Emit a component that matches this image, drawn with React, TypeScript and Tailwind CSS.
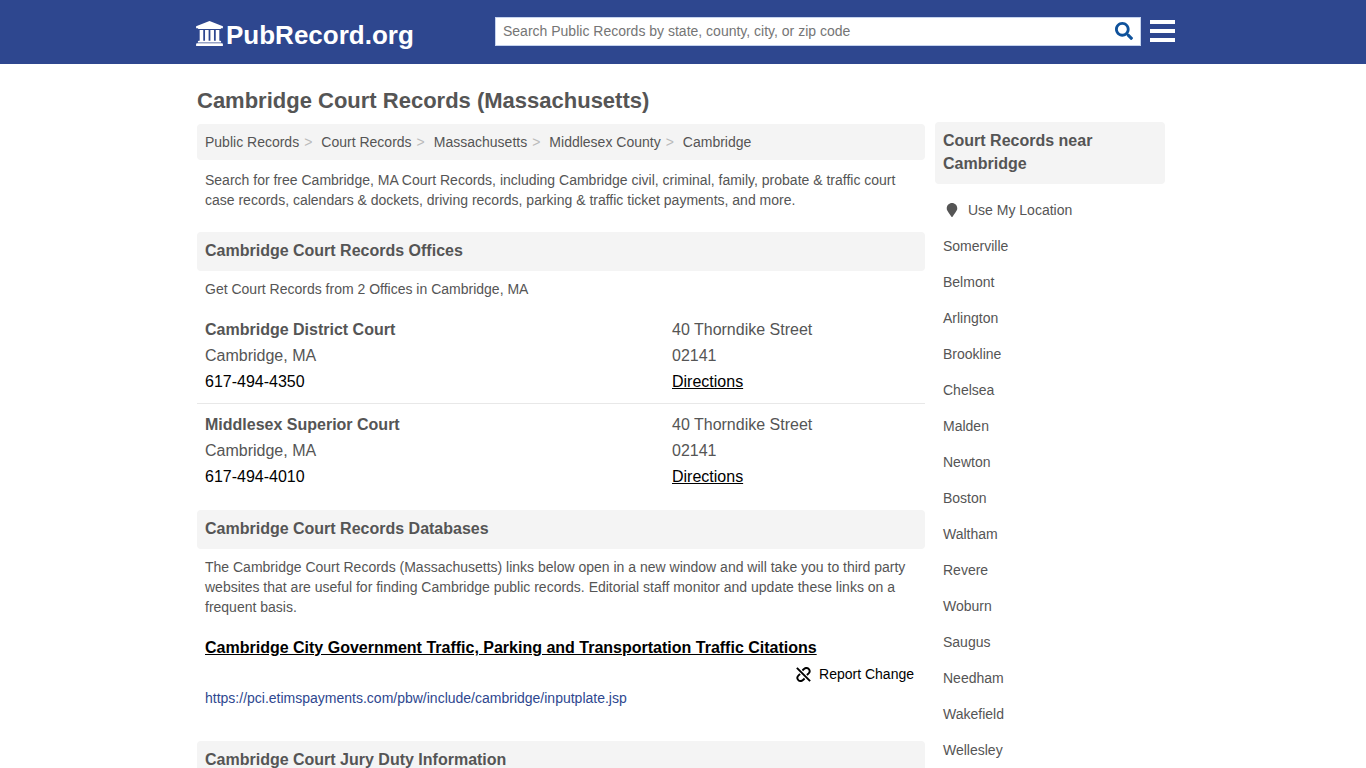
import React from "react";
import { FaMapMarker, FaSearch } from "react-icons/fa";

interface Office {
  name: string;
  city: string;
  phone: string;
  street: string;
  zip: string;
}

const breadcrumbs = [
  "Public Records",
  "Court Records",
  "Massachusetts",
  "Middlesex County",
  "Cambridge",
];

const offices: Office[] = [
  {
    name: "Cambridge District Court",
    city: "Cambridge, MA",
    phone: "617-494-4350",
    street: "40 Thorndike Street",
    zip: "02141",
  },
  {
    name: "Middlesex Superior Court",
    city: "Cambridge, MA",
    phone: "617-494-4010",
    street: "40 Thorndike Street",
    zip: "02141",
  },
];

const nearby = [
  "Somerville",
  "Belmont",
  "Arlington",
  "Brookline",
  "Chelsea",
  "Malden",
  "Newton",
  "Boston",
  "Waltham",
  "Revere",
  "Woburn",
  "Saugus",
  "Needham",
  "Wakefield",
  "Wellesley",
];

const BankIcon = () => (
  <svg viewBox="0 0 1920 1792" fill="currentColor" className="h-[25px] w-[27px]">
    <path d="M960 0l960 384v128h-128q0 26-20.500 45t-48.500 19h-1526q-28 0-48.500-19t-20.500-45h-128v-128zM256 640h256v768h128v-768h256v768h128v-768h256v768h128v-768h256v768h59q28 0 48.500 19t20.500 45v64h-1664v-64q0-26 20.500-45t48.500-19h59v-768zM1851 1600q28 0 48.500 19t20.500 45v128h-1920v-128q0-26 20.500-45t48.500-19h1782z" />
  </svg>
);

// two chain halves with a slash between them
const UnlinkIcon = () => (
  <svg
    viewBox="0 0 14 14"
    fill="none"
    stroke="currentColor"
    strokeWidth="1.800"
    className="size-[15px]"
  >
    <path d="M0.800 0.800l12.400 12.400" />
    <path d="M6 3.200l1.400-1.300a3 3 0 0 1 4.700 0.200a3 3 0 0 1-0.300 3.900l-1.600 1.500" />
    <path d="M8 10.800l-1.400 1.300a3 3 0 0 1-4.700-0.200a3 3 0 0 1 0.300-3.900l1.600-1.500" />
  </svg>
);

const SectionTitle: React.FC<{ children: React.ReactNode }> = ({ children }) => (
  <h2 className="rounded bg-[#f4f4f4] px-2 pt-[7px] pb-[9px] text-base/[23px] font-bold">
    {children}
  </h2>
);

const Header = () => (
  <header className="bg-[#2e478f]">
    <div className="mx-auto flex h-16 max-w-[984px] items-center pb-0.5 pl-[5px]">
      <a href="#" className="flex items-center gap-[3px] pt-1 text-[26px]/8 font-bold text-white">
        <BankIcon />
        <span className="pt-1">PubRecord.org</span>
      </a>
      <form
        className="ml-auto flex h-[29px] w-[646px] items-center border border-[#c5d3ee] bg-white"
        onSubmit={(e) => e.preventDefault()}
      >
        <input
          type="text"
          aria-label="Search Public Records"
          placeholder="Search Public Records by state, county, city, or zip code"
          className="h-full min-w-0 flex-1 px-[7px] text-sm text-[#555] outline-none placeholder:text-[#757575]"
        />
        <button type="submit" aria-label="Search" className="px-[7px] text-[#0f529b]">
          <FaSearch className="size-[18px]" />
        </button>
      </form>
      {/* menu button */}
      <button type="button" aria-label="Menu" className="ml-[9px] flex w-[25px] flex-col gap-[5px]">
        <span className="h-1 bg-white"></span>
        <span className="h-1 bg-white"></span>
        <span className="h-1 bg-white"></span>
      </button>
    </div>
  </header>
);

const OfficeRow: React.FC<{ office: Office }> = ({ office }) => (
  <li className="flex border-b border-[#e8e8e8] px-2 py-2 text-base/[26px] last:border-b-0">
    <div className="flex-1">
      <h3 className="font-bold">{office.name}</h3>
      <p>{office.city}</p>
      <a href={`tel:${office.phone}`} className="text-black">
        {office.phone}
      </a>
    </div>
    <div className="w-[245px]">
      <p>{office.street}</p>
      <p>{office.zip}</p>
      <a href="#" className="text-black underline">
        Directions
      </a>
    </div>
  </li>
);

const Sidebar = () => (
  <aside className="w-[230px] shrink-0 pt-[58px]">
    <SectionTitle>Court Records near Cambridge</SectionTitle>
    <ul className="mt-2 px-2 text-sm/9">
      <li>
        <a href="#" className="flex items-center gap-[7px]">
          <FaMapMarker className="h-3.5 w-[18px]" />
          Use My Location
        </a>
      </li>
      {nearby.map((city) => (
        <li key={city}>
          <a href="#">{city}</a>
        </li>
      ))}
    </ul>
  </aside>
);

export default function App() {
  return (
    <div className="min-h-screen bg-white font-['Liberation_Sans',Arial,sans-serif] text-[#555]">
      <Header />
      <div className="mx-auto flex max-w-[984px] gap-2.5 pr-2.5 pl-1.5">
        <main className="min-w-0 flex-1 text-sm/5">
          <h1 className="pt-[22px] pb-2 text-[22px]/[30px] font-bold">
            Cambridge Court Records (Massachusetts)
          </h1>
          <nav aria-label="Breadcrumb" className="rounded bg-[#f4f4f4] p-2">
            <ol className="flex">
              {breadcrumbs.map((crumb, i) => (
                <li key={crumb}>
                  <a href="#">{crumb}</a>
                  {i < breadcrumbs.length - 1 && (
                    <span className="pr-[9px] pl-[5px] text-[#bbb]">&gt;</span>
                  )}
                </li>
              ))}
            </ol>
          </nav>
          <p className="mt-2.5 mb-[22px] px-2">
            Search for free Cambridge, MA Court Records, including Cambridge civil, criminal,
            family, probate &amp; traffic court case records, calendars &amp; dockets, driving
            records, parking &amp; traffic ticket payments, and more.
          </p>

          <SectionTitle>Cambridge Court Records Offices</SectionTitle>
          <p className="mt-2 px-2">Get Court Records from 2 Offices in Cambridge, MA</p>
          <ul className="mt-2.5 mb-3">
            {offices.map((office) => (
              <OfficeRow key={office.name} office={office} />
            ))}
          </ul>

          <SectionTitle>Cambridge Court Records Databases</SectionTitle>
          <p className="mt-2 px-2">
            The Cambridge Court Records (Massachusetts) links below open in a new window and will
            take you to third party websites that are useful for finding Cambridge public records.
            Editorial staff monitor and update these links on a frequent basis.
          </p>
          <div className="mt-5 mb-8 px-2 py-px">
            <a href="#" className="text-base/5 font-bold text-black underline">
              Cambridge City Government Traffic, Parking and Transportation Traffic Citations
            </a>
            <div className="mt-1.5 flex justify-end pr-[3px]">
              <button type="button" className="flex items-center gap-2 text-black">
                <UnlinkIcon />
                Report Change
              </button>
            </div>
            <p className="mt-1 text-[#2e478f]">
              https://pci.etimspayments.com/pbw/include/cambridge/inputplate.jsp
            </p>
          </div>

          <SectionTitle>Cambridge Court Jury Duty Information</SectionTitle>
        </main>
        <Sidebar />
      </div>
    </div>
  );
}
